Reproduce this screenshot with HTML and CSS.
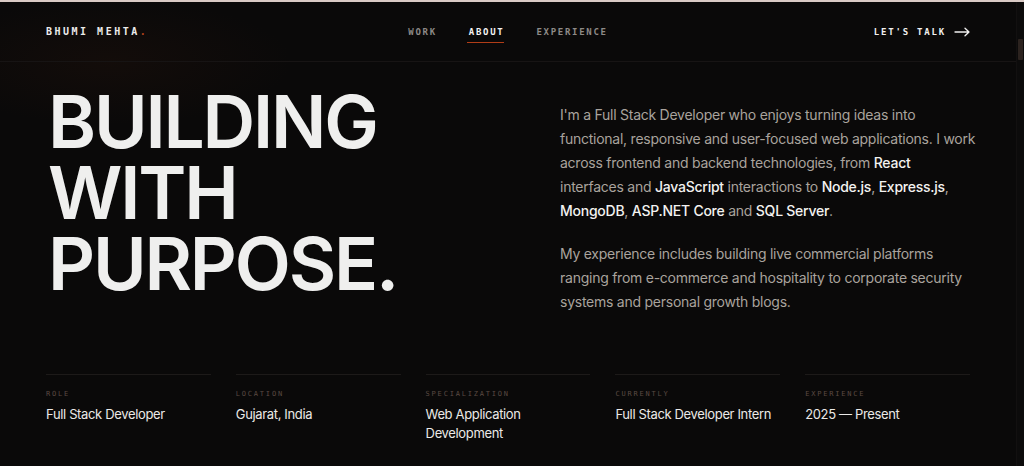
FILE: index.html
```html
<!DOCTYPE html>
<html lang="en">
<head>
<meta charset="utf-8">
<title>Bhumi Mehta — About</title>
<link rel="stylesheet" href="styles.css">
</head>
<body>
<div class="page">
  <header class="site-header">
    <a class="logo" href="#">BHUMI MEHTA<span class="dot">.</span></a>
    <nav class="nav">
      <a href="#" class="nav-link">WORK</a>
      <a href="#" class="nav-link active">ABOUT</a>
      <a href="#" class="nav-link">EXPERIENCE</a>
    </nav>
    <a href="#" class="cta">LET'S TALK
      <svg class="arrow" width="16" height="10" viewBox="0 0 16 10" fill="none" stroke="currentColor" stroke-width="1.3" stroke-linecap="round" stroke-linejoin="round">
        <path d="M1 5h14M11 1.2L15 5l-4 3.8"/>
      </svg>
    </a>
  </header>

  <main class="about">
    <section class="hero">
      <h1 class="headline">BUILDING<br>WITH<br>PURPOSE.</h1>
      <div class="intro">
        <p>I'm a Full Stack Developer who enjoys turning ideas into functional, responsive and user-focused web applications. I work across frontend and backend technologies, from <strong>React</strong> interfaces and <strong>JavaScript</strong> interactions to <strong>Node.js</strong>, <strong>Express.js</strong>, <strong>MongoDB</strong>, <strong>ASP.NET Core</strong> and <strong>SQL Server</strong>.</p>
        <p>My experience includes building live commercial platforms ranging from e-commerce and hospitality to corporate security systems and personal growth blogs.</p>
      </div>
    </section>

    <dl class="facts">
      <div class="fact"><dt>ROLE</dt><dd>Full Stack Developer</dd></div>
      <div class="fact"><dt>LOCATION</dt><dd>Gujarat, India</dd></div>
      <div class="fact"><dt>SPECIALIZATION</dt><dd>Web Application Development</dd></div>
      <div class="fact"><dt>CURRENTLY</dt><dd>Full Stack Developer Intern</dd></div>
      <div class="fact"><dt>EXPERIENCE</dt><dd>2025 — Present</dd></div>
    </dl>
  </main>
</div>
<div class="scrollbar"><div class="thumb"></div></div>
</body>
</html>
```

FILE: styles.css
```css
* { box-sizing: border-box; margin: 0; padding: 0; }

html, body { height: 100%; }

body {
  display: flex;
  background: #0a0909;
  color: #f2f0ee;
  font-family: Inter, "Noto Sans", sans-serif;
  overflow: hidden;
  border-top: 2px solid #d9cac5;
}

a { color: inherit; text-decoration: none; }

.page {
  flex: 1;
  min-width: 0;
  background: radial-gradient(ellipse 260px 90px at 110px 60px, rgba(60, 28, 14, 0.18), transparent 70%), #0a0909;
}

/* top bar */
.site-header {
  height: 60px;
  padding: 0 46px;
  display: flex;
  align-items: center;
  justify-content: space-between;
  border-bottom: 1px solid #171414;
  font-family: "DejaVu Sans Mono", "Liberation Mono", monospace;
}

.logo {
  font-size: 10px;
  font-weight: 700;
  letter-spacing: 2.5px;
  color: #ecebea;
  width: 200px;
}

.logo .dot { color: #b4431c; }

.nav {
  display: flex;
  gap: 32px;
}

.nav-link {
  position: relative;
  font-size: 9px;
  letter-spacing: 1.7px;
  color: #8e8a87;
  font-weight: 700;
}

.nav-link.active { color: #f4f3f2; }

.nav-link.active::after {
  content: "";
  position: absolute;
  left: -2px;
  right: 0;
  bottom: -6px;
  height: 1px;
  background: #b13d17;
}

.cta {
  width: 200px;
  display: flex;
  align-items: center;
  justify-content: flex-end;
  gap: 8px;
  font-size: 9px;
  font-weight: 700;
  letter-spacing: 1.8px;
  color: #f1f0ef;
}

.arrow { display: block; }

/* about section */
.about { padding: 0 46px; }

.hero {
  display: grid;
  grid-template-columns: 1fr 410px;
  padding-top: 24px;
}

.headline {
  font-size: 73px;
  line-height: 71px;
  font-weight: 600;
  letter-spacing: -0.03em;
  color: #efefee;
  margin-left: 2px;
}

.intro {
  padding-top: 17px;
  margin-right: -6px;
  font-size: 14px;
  line-height: 24px;
  letter-spacing: -0.25px;
  color: #a9a39d;
}

.intro p + p { margin-top: 19px; }

.intro strong {
  color: #f3f2f0;
  font-weight: 500;
}

.facts {
  display: grid;
  grid-template-columns: repeat(5, 1fr);
  gap: 25px;
  margin-top: 60px;
}

.fact {
  border-top: 1px solid #1d1a19;
  padding-top: 14px;
}

.fact dt {
  font-family: "DejaVu Sans Mono", "Liberation Mono", monospace;
  font-size: 7px;
  line-height: 10px;
  letter-spacing: 1.8px;
  color: #5a4a43;
}

.fact dd {
  margin-top: 6px;
  font-size: 13px;
  line-height: 19px;
  letter-spacing: -0.35px;
  color: #ebe9e7;
}

/* page scrollbar */
.scrollbar {
  width: 8px;
  flex: none;
  background: #0c0b0b;
  border-left: 1px solid #121010;
}

.thumb {
  width: 5px;
  height: 21px;
  margin: 37px 0 0 1px;
  background: #2c231f;
  border-radius: 1px;
}
```
